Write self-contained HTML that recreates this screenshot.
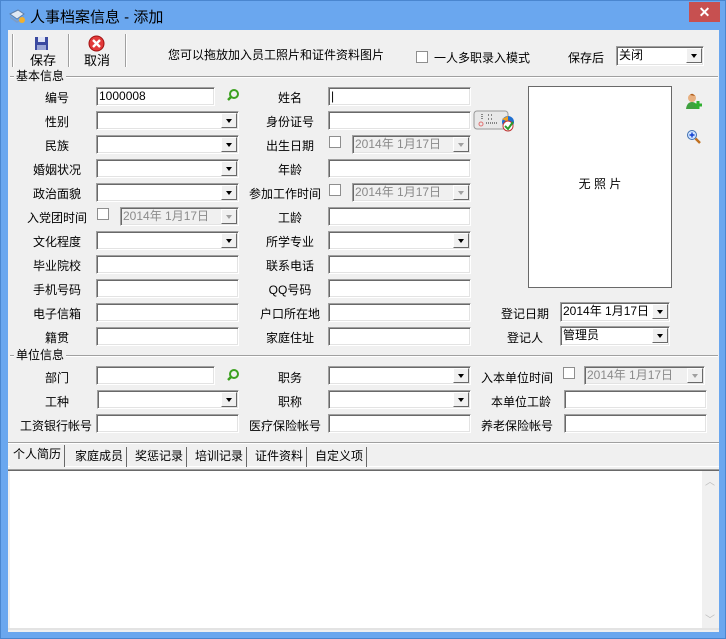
<!DOCTYPE html>
<html><head><meta charset="utf-8"><style>
*{margin:0;padding:0;box-sizing:border-box}
body{width:726px;height:639px;overflow:hidden;background:#fff;font-family:"Liberation Sans","Noto Sans CJK SC","WenQuanYi Zen Hei",sans-serif;font-size:12px;color:#000;position:relative}
.win{position:absolute;left:0;top:0;width:726px;height:639px;background:#6aa7ef;border:1px solid #4a86cf}
.client{position:absolute;left:8px;top:30px;width:711px;height:602px;background:#f0f0f0}
.title{position:absolute;left:29px;top:5px;font-size:15px;color:#000}
.close{position:absolute;left:688px;top:1px;width:31px;height:20px;background:#c75050;color:#fff;text-align:center;font-size:14px;line-height:20px;font-weight:bold}
.a{position:absolute}
.lb{position:absolute;text-align:center;font-size:12px;white-space:nowrap;line-height:20px}
.in{position:absolute;height:19px;background:#fff;border:1px solid;border-color:#a0a0a0 #fff #fff #a0a0a0;box-shadow:inset 1px 1px 0 #696969,inset -1px -1px 0 #e3e3e3;font-size:12px;line-height:17px;padding-left:2px}
.cb .bt{position:absolute;right:1px;top:1px;width:16px;height:15px;background:#f0f0f0;border:1px solid;border-color:#fff #696969 #696969 #fff}
.cb .bt:after{content:"";position:absolute;left:4px;top:5px;border-left:3.5px solid transparent;border-right:3.5px solid transparent;border-top:4px solid #000}
.dt{background:#f0f0f0;color:#8a8a8a}
.dt .bt:after{border-top-color:#a0a0a0}
.ck{position:absolute;width:12px;height:12px;background:#fff;border:1px solid #8e8e8e}
.sep{position:absolute;width:2px;border-left:1px solid #a0a0a0;border-right:1px solid #fff}
.hl{position:absolute;height:2px;border-top:1px solid #a0a0a0;border-bottom:1px solid #fff}
.tab{position:absolute;top:447px;height:20px;font-size:12px;line-height:19px;border-right:1px solid #696969;padding:0 3px}
</style></head><body>
<div class="win">
<svg class="a" style="left:7px;top:7px" width="18" height="16" viewBox="0 0 18 16"><path d="M2 6 L10 2 L16 6 L9 11 Z" fill="#dfe8f4" stroke="#5f7fa8"/><path d="M2 8 L9 13 L16 8 L16 10 L9 15 L2 10Z" fill="#7e9cc4"/><circle cx="14" cy="12" r="3" fill="#f0b030"/></svg>
<div class="title">人事档案信息 - 添加</div>
<div class="close">✕</div>
</div>
<div class="client"></div>

<!-- toolbar -->
<div class="sep" style="left:12px;top:34px;height:33px"></div>
<div class="sep" style="left:68px;top:34px;height:33px"></div>
<div class="sep" style="left:125px;top:34px;height:33px"></div>
<svg class="a" style="left:34px;top:36px" width="15" height="15" viewBox="0 0 15 15"><rect x="1" y="1" width="13" height="13" fill="#3b4aa0"/><rect x="4" y="1" width="7" height="5" fill="#dfe3f5"/><rect x="3" y="9" width="9" height="5" fill="#9aa6d6"/></svg>
<div class="lb" style="left:30px;top:51px;font-size:13px">保存</div>
<svg class="a" style="left:88px;top:35px" width="17" height="17" viewBox="0 0 17 17"><circle cx="8.5" cy="8.5" r="7.5" fill="#e23a3a" stroke="#a01010"/><path d="M5 5 L12 12 M12 5 L5 12" stroke="#fff" stroke-width="2.4"/></svg>
<div class="lb" style="left:84px;top:51px;font-size:13px">取消</div>
<div class="lb" style="left:168px;top:45px">您可以拖放加入员工照片和证件资料图片</div>
<div class="ck" style="left:416px;top:51px"></div>
<div class="lb" style="left:434px;top:48px">一人多职录入模式</div>
<div class="lb" style="left:568px;top:48px">保存后</div>
<div class="in cb" style="left:616px;top:46px;width:88px;height:20px">关闭<div class="bt"></div></div>

<!-- groups -->
<div class="hl" style="left:10px;top:76px;width:708px"></div>
<div class="lb" style="left:14px;top:66px;background:#f0f0f0;padding:0 2px">基本信息</div>
<div class="hl" style="left:10px;top:355px;width:708px"></div>
<div class="lb" style="left:14px;top:345px;background:#f0f0f0;padding:0 2px">单位信息</div>

<!-- col1 -->
<div class="lb" style="left:17px;top:88px;width:80px">编号</div>
<div class="in" style="left:96px;top:87px;width:119px">1000008</div>
<svg class="a" style="left:226px;top:88px" width="14" height="14" viewBox="0 0 14 14"><circle cx="8" cy="6" r="4" fill="none" stroke="#3ca020" stroke-width="2"/><path d="M5 9 L2 12" stroke="#3ca020" stroke-width="2.5"/></svg>
<div class="lb" style="left:17px;top:112px;width:80px">性别</div>
<div class="in cb" style="left:96px;top:111px;width:143px"><div class="bt"></div></div>
<div class="lb" style="left:17px;top:136px;width:80px">民族</div>
<div class="in cb" style="left:96px;top:135px;width:143px"><div class="bt"></div></div>
<div class="lb" style="left:17px;top:160px;width:80px">婚姻状况</div>
<div class="in cb" style="left:96px;top:159px;width:143px"><div class="bt"></div></div>
<div class="lb" style="left:17px;top:184px;width:80px">政治面貌</div>
<div class="in cb" style="left:96px;top:183px;width:143px"><div class="bt"></div></div>
<div class="lb" style="left:17px;top:208px;width:80px">入党团时间</div>
<div class="ck" style="left:97px;top:208px"></div>
<div class="in cb dt" style="left:120px;top:207px;width:119px">2014年 1月17日<div class="bt"></div></div>
<div class="lb" style="left:17px;top:232px;width:80px">文化程度</div>
<div class="in cb" style="left:96px;top:231px;width:143px"><div class="bt"></div></div>
<div class="lb" style="left:17px;top:256px;width:80px">毕业院校</div>
<div class="in" style="left:96px;top:255px;width:143px"></div>
<div class="lb" style="left:17px;top:280px;width:80px">手机号码</div>
<div class="in" style="left:96px;top:279px;width:143px"></div>
<div class="lb" style="left:17px;top:304px;width:80px">电子信箱</div>
<div class="in" style="left:96px;top:303px;width:143px"></div>
<div class="lb" style="left:17px;top:328px;width:80px">籍贯</div>
<div class="in" style="left:96px;top:327px;width:143px"></div>

<!-- col2 -->
<div class="lb" style="left:245px;top:88px;width:90px">姓名</div>
<div class="in" style="left:328px;top:87px;width:143px">|</div>
<div class="lb" style="left:245px;top:112px;width:90px">身份证号</div>
<div class="in" style="left:328px;top:111px;width:143px"></div>
<svg class="a" style="left:473px;top:110px" width="42" height="23" viewBox="0 0 42 23"><rect x="1" y="1" width="34" height="18" rx="3" fill="#e8e8e8" stroke="#999"/><path d="M9 4v5M15 5h1M18 5h1M15 9h1M18 9h1M13 13h12" stroke="#222" stroke-dasharray="1 1"/><circle cx="8" cy="14" r="2" fill="none" stroke="#e07070"/><circle cx="35" cy="12" r="6" fill="#1f6fd0"/><path d="M29 9 L35 6 L35 12Z" fill="#f0a020"/><circle cx="35" cy="16" r="5" fill="#fff" stroke="#c03030"/><path d="M32 16 L35 19 L40 12" stroke="#2a9a2a" stroke-width="2" fill="none"/></svg>
<div class="lb" style="left:245px;top:136px;width:90px">出生日期</div>
<div class="ck" style="left:329px;top:136px"></div>
<div class="in cb dt" style="left:352px;top:135px;width:119px">2014年 1月17日<div class="bt"></div></div>
<div class="lb" style="left:245px;top:160px;width:90px">年龄</div>
<div class="in" style="left:328px;top:159px;width:143px"></div>
<div class="lb" style="left:245px;top:184px;width:80px">参加工作时间</div>
<div class="ck" style="left:329px;top:184px"></div>
<div class="in cb dt" style="left:352px;top:183px;width:119px">2014年 1月17日<div class="bt"></div></div>
<div class="lb" style="left:245px;top:208px;width:90px">工龄</div>
<div class="in" style="left:328px;top:207px;width:143px"></div>
<div class="lb" style="left:245px;top:232px;width:90px">所学专业</div>
<div class="in cb" style="left:328px;top:231px;width:143px"><div class="bt"></div></div>
<div class="lb" style="left:245px;top:256px;width:90px">联系电话</div>
<div class="in" style="left:328px;top:255px;width:143px"></div>
<div class="lb" style="left:245px;top:280px;width:90px">QQ号码</div>
<div class="in" style="left:328px;top:279px;width:143px"></div>
<div class="lb" style="left:245px;top:304px;width:90px">户口所在地</div>
<div class="in" style="left:328px;top:303px;width:143px"></div>
<div class="lb" style="left:245px;top:328px;width:90px">家庭住址</div>
<div class="in" style="left:328px;top:327px;width:143px"></div>

<!-- photo -->
<div class="a" style="left:528px;top:86px;width:144px;height:202px;background:#fff;border:1px solid #696969;text-align:center;line-height:194px;font-size:12px">无 照 片</div>
<svg class="a" style="left:684px;top:93px" width="19" height="17" viewBox="0 0 19 17"><circle cx="8" cy="5" r="4" fill="#e8b080"/><path d="M6 2 Q8 -1 11 3" fill="#b06020"/><path d="M2 16 Q3 9 8 9 Q13 9 14 16Z" fill="#40a040"/><path d="M14 8v8M10 12h8" stroke="#30b030" stroke-width="3"/></svg>
<svg class="a" style="left:686px;top:129px" width="16" height="16" viewBox="0 0 16 16"><circle cx="6" cy="6" r="4.5" fill="#cfe4ff" stroke="#4070b0"/><path d="M6 3.5v5M3.5 6h5" stroke="#1040d0" stroke-width="1.4"/><path d="M9.5 9.5 L14 14" stroke="#c07020" stroke-width="2.5"/></svg>
<div class="lb" style="left:490px;top:304px;width:70px">登记日期</div>
<div class="in cb" style="left:560px;top:302px;width:110px;height:20px">2014年 1月17日<div class="bt"></div></div>
<div class="lb" style="left:490px;top:328px;width:70px">登记人</div>
<div class="in cb" style="left:560px;top:326px;width:110px;height:20px">管理员<div class="bt"></div></div>

<!-- unit info -->
<div class="lb" style="left:17px;top:368px;width:80px">部门</div>
<div class="in" style="left:96px;top:366px;width:119px"></div>
<svg class="a" style="left:226px;top:368px" width="14" height="14" viewBox="0 0 14 14"><circle cx="8" cy="6" r="4" fill="none" stroke="#3ca020" stroke-width="2"/><path d="M5 9 L2 12" stroke="#3ca020" stroke-width="2.5"/></svg>
<div class="lb" style="left:245px;top:368px;width:90px">职务</div>
<div class="in cb" style="left:328px;top:366px;width:143px"><div class="bt"></div></div>
<div class="lb" style="left:478px;top:368px;width:78px">入本单位时间</div>
<div class="ck" style="left:563px;top:367px"></div>
<div class="in cb dt" style="left:584px;top:366px;width:121px">2014年 1月17日<div class="bt"></div></div>
<div class="lb" style="left:17px;top:392px;width:80px">工种</div>
<div class="in cb" style="left:97px;top:390px;width:142px"><div class="bt"></div></div>
<div class="lb" style="left:245px;top:392px;width:90px">职称</div>
<div class="in cb" style="left:328px;top:390px;width:143px"><div class="bt"></div></div>
<div class="lb" style="left:478px;top:392px;width:86px">本单位工龄</div>
<div class="in" style="left:564px;top:390px;width:143px"></div>
<div class="lb" style="left:17px;top:416px;width:78px">工资银行帐号</div>
<div class="in" style="left:96px;top:414px;width:143px"></div>
<div class="lb" style="left:245px;top:416px;width:80px">医疗保险帐号</div>
<div class="in" style="left:328px;top:414px;width:143px"></div>
<div class="lb" style="left:478px;top:416px;width:78px">养老保险帐号</div>
<div class="in" style="left:564px;top:414px;width:143px"></div>

<!-- tabs -->
<div class="hl" style="left:8px;top:442px;width:711px"></div>
<div class="a" style="left:8px;top:466px;width:711px;height:1px;background:#fff"></div>
<div class="tab" style="left:10px;top:445px;height:22px;background:#f0f0f0">个人简历</div>
<div class="tab" style="left:72px">家庭成员</div>
<div class="tab" style="left:132px">奖惩记录</div>
<div class="tab" style="left:192px">培训记录</div>
<div class="tab" style="left:252px">证件资料</div>
<div class="tab" style="left:312px">自定义项</div>
<div class="a" style="left:8px;top:469px;width:711px;height:2px;border-top:1px solid #a0a0a0;border-bottom:1px solid #696969"></div>
<div class="a" style="left:10px;top:471px;width:708px;height:157px;background:#fff"></div>
<div class="a" style="left:702px;top:471px;width:16px;height:157px;background:#f0f0f0;color:#bbb;font-size:10px;text-align:center">
<div style="position:absolute;top:2px;width:16px">︿</div><div style="position:absolute;bottom:2px;width:16px">﹀</div></div>
<div class="a" style="left:8px;top:628px;width:711px;height:2px;background:#e3e3e3"></div>
</body></html>
